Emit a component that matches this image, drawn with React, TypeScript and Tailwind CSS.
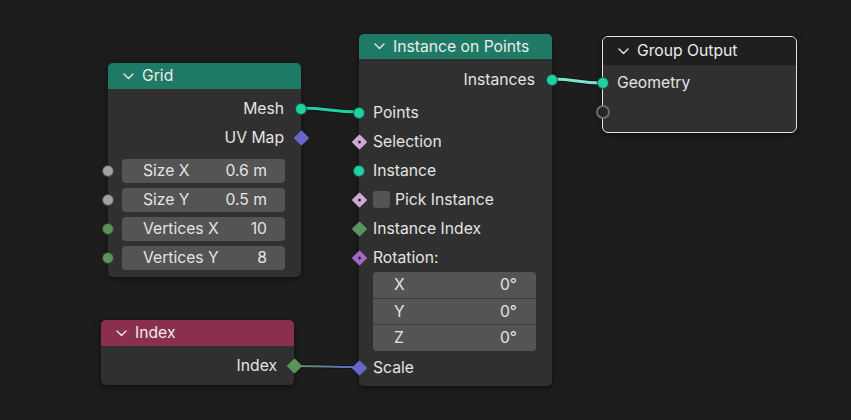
import React from "react";

type Shape = "circle" | "diamond" | "diamondDot" | "hollow";

function Socket({ shape, color, side }: { shape: Shape; color: string; side: "left" | "right" }) {
  if (shape === "circle") {
    const pos = side === "left" ? "left-[-6px]" : "right-[-6px]";
    return (
      <span
        className={`absolute ${pos} top-1/2 -translate-y-1/2 w-[12px] h-[12px] rounded-full border border-[#111]/60 ${color}`}
      />
    );
  }
  if (shape === "hollow") {
    const pos = side === "left" ? "left-[-7px]" : "right-[-7px]";
    return (
      <span
        className={`absolute ${pos} top-1/2 -translate-y-1/2 w-[14px] h-[14px] rounded-full border-2 border-[#6c6c6c] bg-[#262626]`}
      />
    );
  }
  const pos = side === "left" ? "left-[-5.5px]" : "right-[-5.5px]";
  return (
    <span
      className={`absolute ${pos} top-1/2 -translate-y-1/2 rotate-45 w-[11px] h-[11px] rounded-[1px] ${color} flex items-center justify-center`}
    >
      {shape === "diamondDot" && <span className="w-[3px] h-[3px] rounded-full bg-[#2a2a2a]" />}
    </span>
  );
}

function Chevron() {
  return (
    <svg width="11" height="7" viewBox="0 0 11 7" className="shrink-0">
      <polyline points="1,1 5.5,5.5 10,1" fill="none" stroke="#e8e8e8" strokeWidth="1.4" strokeLinecap="round" strokeLinejoin="round" />
    </svg>
  );
}

function Header({ title, bg, h }: { title: string; bg: string; h: string }) {
  return (
    <div className={`${h} ${bg} rounded-t-[5px] flex items-center pl-[15px] gap-[8px] text-[#ececec]`}>
      <Chevron />
      <span>{title}</span>
    </div>
  );
}

function OutRow({ label, shape, color, pr = "pr-[17px]" }: { label: string; shape: Shape; color: string; pr?: string }) {
  return (
    <div className={`relative h-[29px] flex items-center justify-end ${pr} text-[#e4e4e4]`}>
      <span>{label}</span>
      <Socket shape={shape} color={color} side="right" />
    </div>
  );
}

function InRow({ label, shape, color, children }: { label?: string; shape: Shape; color: string; children?: React.ReactNode }) {
  return (
    <div className="relative h-[29px] flex items-center pl-[14px] text-[#e4e4e4]">
      {children}
      {label && <span>{label}</span>}
      <Socket shape={shape} color={color} side="left" />
    </div>
  );
}

function Field({ label, value, color }: { label: string; value: string; color: string }) {
  return (
    <div className="relative h-[24px] pl-[14px] pr-[16px]">
      <div className="h-full rounded-[4px] bg-[#545454] flex items-center justify-between pl-[21px] pr-[18px] text-[#e4e4e4]">
        <span>{label}</span>
        <span>{value}</span>
      </div>
      <Socket shape="circle" color={color} side="left" />
    </div>
  );
}

export default function App() {
  return (
    <div className="relative w-[851px] h-[420px] bg-[#1d1d1d] overflow-hidden font-['Inter','Noto_Sans',sans-serif] text-[15.7px] leading-none">
      {/* links */}
      <svg className="absolute inset-0" width="851" height="420" viewBox="0 0 851 420">
        <defs>
          <linearGradient id="idxLink" x1="293" y1="0" x2="359" y2="0" gradientUnits="userSpaceOnUse">
            <stop offset="0" stopColor="#5f9a5f" />
            <stop offset="1" stopColor="#6464cc" />
          </linearGradient>
        </defs>
        <path d="M301,108 C330,108 330,112 359,112" fill="none" stroke="#111" strokeWidth="5" />
        <path d="M301,108 C330,108 330,112 359,112" fill="none" stroke="#1fcf9f" strokeWidth="3" />
        <path d="M552,79 C577,79 577,83 602,83" fill="none" stroke="#111" strokeWidth="5" />
        <path d="M552,79 C577,79 577,83 602,83" fill="none" stroke="#7fe3cf" strokeWidth="3" />
        <path d="M293,366 C326,366 326,367 359,367" fill="none" stroke="#111" strokeWidth="4" />
        <path d="M293,366 C326,366 326,367 359,367" fill="none" stroke="url(#idxLink)" strokeWidth="2" />
      </svg>

      {/* Grid node */}
      <div className="absolute left-[108px] top-[63px] w-[193px] rounded-[5px] bg-[#303030] shadow-[0_2px_6px_rgba(0,0,0,0.5)]">
        <Header title="Grid" bg="bg-[#1e7a65]" h="h-[26px]" />
        <div className="pt-[5px] pb-[7px]">
          <OutRow label="Mesh" shape="circle" color="bg-[#1fd1a1]" />
          <OutRow label="UV Map" shape="diamond" color="bg-[#6666cc]" />
          <div className="mt-[7px] flex flex-col gap-[5px]">
            <Field label="Size X" value="0.6 m" color="bg-[#a1a1a1]" />
            <Field label="Size Y" value="0.5 m" color="bg-[#a1a1a1]" />
            <Field label="Vertices X" value="10" color="bg-[#5c935c]" />
            <Field label="Vertices Y" value="8" color="bg-[#5c935c]" />
          </div>
        </div>
      </div>

      {/* Instance on Points */}
      <div className="absolute left-[359px] top-[34px] w-[193px] rounded-[5px] bg-[#303030] shadow-[0_2px_6px_rgba(0,0,0,0.5)]">
        <Header title="Instance on Points" bg="bg-[#1e7a65]" h="h-[25px]" />
        <div className="pt-[6px] pb-[4px]">
          <OutRow label="Instances" shape="circle" color="bg-[#1fd1a1]" />
          <div className="h-[4px]" />
          <InRow label="Points" shape="circle" color="bg-[#1fd1a1]" />
          <InRow label="Selection" shape="diamondDot" color="bg-[#cfa8d8]" />
          <InRow label="Instance" shape="circle" color="bg-[#1fd1a1]" />
          <InRow shape="diamondDot" color="bg-[#cfa8d8]">
            <span className="w-[17px] h-[17px] rounded-[3px] bg-[#545454] mr-[5px]" />
            <span>Pick Instance</span>
          </InRow>
          <InRow label="Instance Index" shape="diamond" color="bg-[#5c935c]" />
          <InRow label="Rotation:" shape="diamondDot" color="bg-[#a766c9]" />
          <div className="ml-[14px] mr-[16px] rounded-[4px] bg-[#545454] flex flex-col text-[#e4e4e4]">
            <div className="h-[27px] flex items-center justify-between pl-[21px] pr-[19px] border-b border-[#3a3a3a]">
              <span>X</span>
              <span>0°</span>
            </div>
            <div className="h-[26px] flex items-center justify-between pl-[21px] pr-[19px] border-b border-[#3a3a3a]">
              <span>Y</span>
              <span>0°</span>
            </div>
            <div className="h-[26px] flex items-center justify-between pl-[21px] pr-[19px]">
              <span>Z</span>
              <span>0°</span>
            </div>
          </div>
          <div className="mt-[2px]">
            <InRow label="Scale" shape="diamond" color="bg-[#6666cc]" />
          </div>
        </div>
      </div>

      {/* Group Output */}
      <div className="absolute left-[602px] top-[36px] w-[195px] rounded-[6px] bg-[#303030] border border-[#e6e6e6] shadow-[0_2px_6px_rgba(0,0,0,0.5)]">
        <div className="h-[28px] bg-[#1f1f1f] rounded-t-[5px] flex items-center pl-[15px] gap-[8px] text-[#ececec]">
          <Chevron />
          <span>Group Output</span>
        </div>
        <div className="pt-[3px] pb-[6px]">
          <InRow label="Geometry" shape="circle" color="bg-[#1fd1a1]" />
          <InRow shape="hollow" color="" />
        </div>
      </div>

      {/* Index */}
      <div className="absolute left-[101px] top-[320px] w-[193px] rounded-[5px] bg-[#303030] shadow-[0_2px_6px_rgba(0,0,0,0.5)]">
        <Header title="Index" bg="bg-[#8a2f4e]" h="h-[26px]" />
        <div className="pt-[5px] pb-[5px]">
          <OutRow label="Index" shape="diamond" color="bg-[#5c935c]" />
        </div>
      </div>
    </div>
  );
}
